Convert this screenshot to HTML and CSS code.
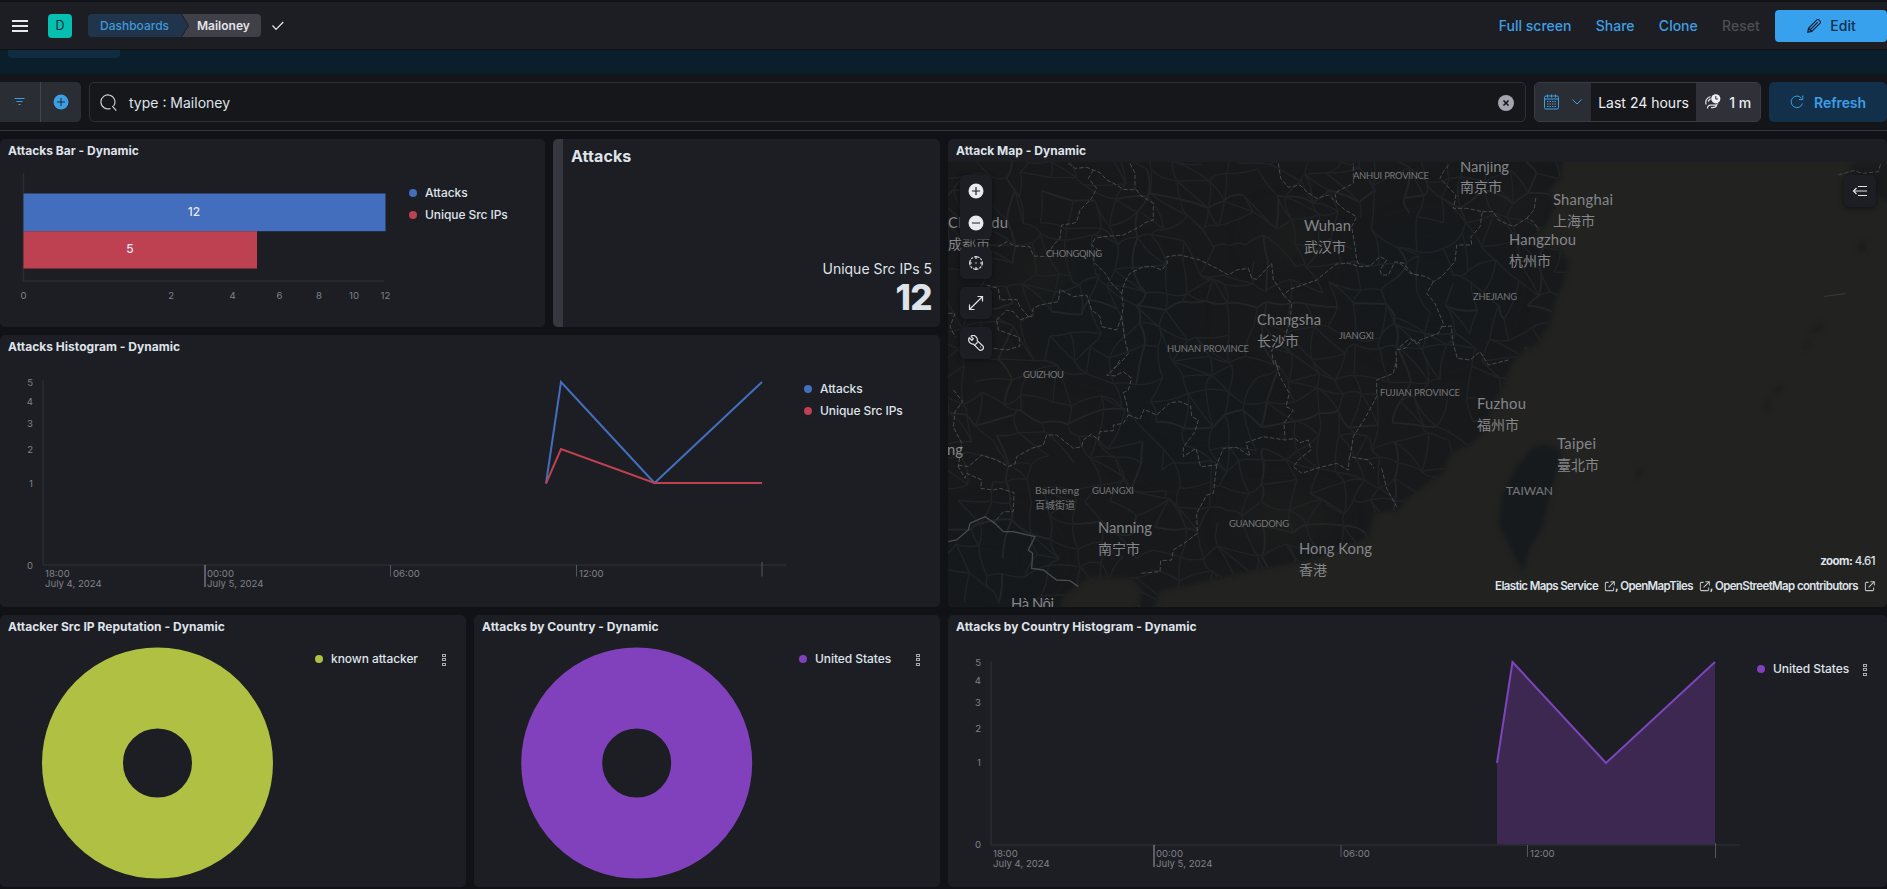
FILE: index.html
```html
<!DOCTYPE html>
<html lang="en">
<head>
<meta charset="utf-8">
<title>Mailoney</title>
<link rel="stylesheet" href="styles.css">
</head>
<body>
<header class="topbar">
  <button class="menu" aria-label="Menu"><i></i><i></i><i></i></button>
  <span class="space">D</span>
  <nav class="crumbs"><a class="crumb first">Dashboards</a><span class="crumb last">Mailoney</span></nav>
  <svg class="check" width="14" height="12" viewBox="0 0 14 12"><path d="M1.5 5.5 5 9.3 12.3 2"/></svg>
  <div class="actions">
    <a>Full screen</a><a>Share</a><a>Clone</a><a class="off">Reset</a>
    <button class="edit"><svg width="16" height="16" viewBox="0 0 16 16"><path d="M1.8 14.2 2.5 10.300 10.900 1.900a1.400 1.400 0 0 1 2 0l1.200 1.200a1.400 1.400 0 0 1 0 2L5.700 13.500ZM2.500 10.300l3.200 3.200M4.300 11.700l7.500-7.500"/></svg>Edit</button>
  </div>
</header>
<div class="strip"><span></span></div>
<section class="query">
  <div class="filters">
    <button><svg width="12" height="10" viewBox="0 0 12 10" class="stroke"><path d="M.5 1.500h10M2.500 4.500h6M4.500 7.500h2"/></svg></button>
    <button><svg width="16" height="16" viewBox="0 0 16 16"><circle cx="8" cy="8" r="7.500" fill="#3d9fe3"/><path d="M8 4v8M4 8h8" stroke="#202a36"/></svg></button>
  </div>
  <div class="search">
    <svg width="18" height="18" viewBox="0 0 18 18"><path d="M10.500 14.400A7 7 0 1 1 13.600 12M12.300 12.200l4 4.500" fill="none" stroke="#d5d8df" stroke-width="1.100"/></svg>
    <span>type : Mailoney</span>
    <svg class="clear" width="16" height="16" viewBox="0 0 16 16"><circle cx="8" cy="8" r="8" fill="#a3a6ad"/><path d="m5.500 5.500 5 5m0-5-5 5" stroke="#17181d" stroke-width="1.700"/></svg>
  </div>
  <div class="dates">
    <button class="cal">
      <svg width="15" height="16" viewBox="0 0 15 16" class="stroke"><rect x=".5" y="2" width="14" height="13" rx="1.500"/><path d="M.5 5h14M3.500.500v3M7.500.500v3M11.500.500v3"/><path d="M3 7.500h9M3 10h9M3 12.500h9" stroke-dasharray="1.500 1"/></svg>
      <svg width="10" height="6" viewBox="0 0 10 6" class="stroke"><path d="m.5.500 4.500 4.500L9.500.500"/></svg>
    </button>
    <span class="range">Last 24 hours</span>
    <span class="every"><svg width="16" height="16" viewBox="0 0 16 16"><g fill="none" stroke="#dfe1e8" stroke-width="1.200"><path d="M5.500 2.500A6 6 0 0 0 1.200 10.500M2.500 14.500a3 3 0 0 1 3-3.300h4.500A4.500 4.500 0 0 0 13 9.500M3 7.500l2.500-3M6 13.500a6 6 0 0 0 6-2"/></g><circle cx="10.800" cy="4.800" r="4.600" fill="#eef0f5"/><path d="M10.800 2v3h2.200" fill="none" stroke="#2b2c33"/></svg>1 m</span>
  </div>
  <button class="refresh"><svg width="14" height="14" viewBox="0 0 14 14" class="stroke"><path d="M12.500 8.500A5.800 5.800 0 1 1 11.300 3M12.800.500v4H9"/></svg>Refresh</button>
</section>
<main class="dash">
  <div class="left">
    <div class="row">
      <article class="panel bar">
        <h2>Attacks Bar - Dynamic</h2>
        <div class="body">
          <svg width="408" height="165" viewBox="0 162 408 165">
            <path class="axis" d="M23.500 173V281.500"/><path class="axis" d="M23 281H384"/>
            <rect x="23.500" y="193.500" width="362" height="37.700" fill="#426ebd"/>
            <rect x="23.500" y="231.200" width="233.500" height="37.300" fill="#bd4150"/>
            <g class="val"><text x="194" y="216">12</text><text x="130" y="253">5</text></g>
            <g class="tick mid"><text x="23.500" y="299">0</text><text x="171.300" y="299">2</text><text x="232.500" y="299">4</text><text x="279.500" y="299">6</text><text x="319" y="299">8</text><text x="354" y="299">10</text><text x="385.500" y="299">12</text></g>
          </svg>
          <ul class="legend"><li><b class="blue"></b>Attacks</li><li><b class="red"></b>Unique Src IPs</li></ul>
        </div>
      </article>
      <article class="panel metric">
        <h3>Attacks</h3>
        <p>Unique Src IPs 5</p><strong>12</strong>
      </article>
    </div>
    <article class="panel histo">
      <h2>Attacks Histogram - Dynamic</h2>
      <div class="body">
        <svg width="803" height="249" viewBox="0 358 803 249">
          <path class="axis" d="M43 380V565M43 565H786"/>
          <path class="mark" d="M390.500 565v11.500M576.500 565v11.500M762 562v14.500"/><path class="mark strong" d="M205 565v22"/>
          <g class="tick end"><text x="33" y="385.500">5</text><text x="33" y="404.500">4</text><text x="33" y="426.500">3</text><text x="33" y="452.500">2</text><text x="33" y="486.500">1</text><text x="33" y="568.500">0</text></g>
          <g class="tick"><text x="45" y="577">18:00</text><text x="45" y="587.300">July 4, 2024</text><text x="207" y="577">00:00</text><text x="207" y="587.300">July 5, 2024</text><text x="393" y="577">06:00</text><text x="579" y="577">12:00</text></g>
          <path class="line" stroke="#426ebd" d="M546 483.500 561 382 654.500 483 762 382"/>
          <path class="line" stroke="#bd4150" d="M546 483.500 561 449 654.500 483H762"/>
        </svg>
        <ul class="legend"><li><b class="blue"></b>Attacks</li><li><b class="red"></b>Unique Src IPs</li></ul>
      </div>
    </article>
  </div>
  <article class="panel map">
    <h2>Attack Map - Dynamic</h2>
    <div class="canvas">
      <svg width="939" height="445" viewBox="948 162 939 445">
        <defs>
          <clipPath id="land"><path d="M948 162H1562L1560 178 1548 190 1555 205 1545 226 1530 240 1560 250 1568 262 1563 286 1555 300 1550 324 1536 345 1520 353 1511 366 1502 388 1494 402 1484 432 1470 444 1452 452 1442 472 1422 488 1408 498 1398 510 1374 513 1368 538 1336 550 1310 560 1270 567 1220 578 1190 585 1160 590 1151 607H1138L1142 588 1131 578 1090 577 1064 596 1058 607H948Z"/></clipPath>
          <filter id="soft" x="-20%" y="-20%" width="140%" height="140%" color-interpolation-filters="sRGB"><feGaussianBlur stdDeviation="2.500"/></filter>
          <filter id="haze" x="-50%" y="-50%" width="200%" height="200%" color-interpolation-filters="sRGB"><feGaussianBlur stdDeviation="14"/></filter>
        </defs>
        <rect x="948" y="162" width="939" height="445" fill="#222220"/>
        <path filter="url(#soft)" fill="#17191b" d="M940 150H1565L1560 178 1548 190 1555 205 1545 226 1530 240 1560 250 1568 262 1563 286 1555 300 1550 324 1536 345 1520 353 1511 366 1502 388 1494 402 1484 432 1470 444 1452 452 1442 472 1422 488 1408 498 1398 510 1374 513 1368 538 1336 550 1310 560 1270 567 1220 578 1190 585 1160 590 1151 615H1138L1142 588 1131 578 1090 577 1064 596 1058 615H940Z"/>
        <g clip-path="url(#land)">
          <g filter="url(#haze)">
            <g fill="#15191c"><ellipse cx="1110" cy="310" rx="70" ry="55"/><ellipse cx="990" cy="560" rx="55" ry="40"/><ellipse cx="1190" cy="420" rx="70" ry="50"/><ellipse cx="1430" cy="290" rx="70" ry="60"/></g>
            <g fill="#1c1d1c"><ellipse cx="1042" cy="272" rx="28" ry="22"/><ellipse cx="1285" cy="520" rx="50" ry="25"/><ellipse cx="1510" cy="206" rx="35" ry="16"/><ellipse cx="1290" cy="240" rx="32" ry="22"/></g>
          </g>
          <g id="roads"></g>
        </g>
        <g filter="url(#soft)">
          <path fill="#161a1d" d="M1530 450 1545 444 1561 452 1552 490 1541 530 1530 548 1523 572 1514 555 1499 525 1502 495 1515 470Z"/>
          <path fill="#191b1d" d="M1852 162H1890V204L1877 196 1868 178 1850 175Z"/>
          <path fill="#1a1b1b" d="M1771 391 1784 384 1780 393ZM1764 406 1770 398 1769 410ZM1809 332 1824 322 1820 332ZM1803 348 1809 341 1808 350ZM1856 248 1866 240 1864 252ZM1638 464 1643 474 1637 480Z"/>
        </g>
        <path d="M1824 296.500 1846 293.500" stroke="#42443f" stroke-width=".7"/>
        <g class="border">
          <g transform="translate(940 130) scale(.33333)">
            <path d="M385 100 405 115 440 112 460 120 480 128 500 150 525 162 550 178 590 180 600 195 640 220 640 270 615 278 600 290 550 315 490 320 465 325 455 345 475 360 475 375 460 385 465 400 500 435 510 455 545 490 550 530 545 560 550 600 555 630 565 670 545 695 520 715"/>
            <path d="M570 100 585 130 585 178M460 120 445 145 470 175 455 205 420 240 410 275 400 280 365 285 360 325 340 345 325 370M175 350 200 335 225 348 270 350 280 378 320 380"/>
            <path d="M545 490 555 455 570 430 610 410 640 410 665 420 682 400 680 380 720 375 780 390 830 415 865 435 890 420 925 415 935 445 950 448 995 400 1000 450 1015 470 1030 495 1050 478 1130 450 1160 425 1190 402 1225 400 1260 410 1290 408 1320 380 1340 390 1320 420 1325 435 1345 435 1365 395 1390 400 1415 430 1440 438"/>
            <path d="M1015 100 1022 145 1045 172 1080 165 1100 185 1130 205 1165 195 1190 218 1185 190 1200 180 1240 160 1240 100M1190 218 1215 240 1250 260 1235 290 1245 350 1250 390 1260 410"/>
            <path d="M1030 495 1055 520 1050 580 1025 640 995 660 1000 700 1025 715M1370 715 1368 660 1395 655 1420 630 1440 640"/>
            <path d="M140 465 175 475 180 510 230 508 240 530 265 560 275 560 280 535 300 525 355 515 360 478 400 500 440 495 455 540 480 560 485 590 530 600 545 560M170 570 200 540 220 545 240 570 270 558M25 550 45 550 30 590 45 620M160 655 200 660 240 648 237 622 175 600 170 570"/>
          </g>
          <g transform="translate(1400 130) scale(.33333)">
            <path d="M0 400 30 430 80 440 100 455 125 440 165 395 170 345 215 345 213 320 240 290 247 245 200 235 160 235 168 195 120 145 130 125 150 100M247 245 280 245 295 270 340 290 380 265 400 275 418 300M380 265 402 240 408 200M100 455 80 490 105 520 130 580 120 600 115 610 60 630 50 642 30 625 0 650M125 590 155 588 157 630 172 685 210 690 240 665 265 705 325 690M1315 135 1360 122 1390 130 1435 125 1443 98"/>
          </g>
          <g transform="translate(940 360) scale(.33333)">
            <path d="M540 0 525 25 500 45 525 48 550 35 575 55 565 90 550 98 560 130 565 165 550 190 520 195 520 212 480 215 475 240 455 222 430 240 425 260 400 265 350 225 320 225 310 255 275 265 230 290 225 312 205 320 170 300 125 285 85 320 52 315 75 355 80 340 125 360 122 385 160 390 180 385 222 398 220 455 190 455 160 490"/>
            <path d="M565 165 600 178 612 148 650 165 690 128 720 125 752 138 755 170 775 180 765 215 730 262 730 290 768 265 782 320 830 315 850 265 890 262 930 288 918 248 970 230 1035 240 1065 235 1080 248 1105 240 1113 270 1080 295 1060 320 1085 340 1130 325 1190 310 1225 330 1228 290 1285 300 1302 325M1325 325 1340 385 1370 440"/>
            <path d="M1005 0 1020 50 1048 100 1038 140 1060 150 1032 190 1035 235M830 315 820 400 800 405 770 460 772 520 735 548 700 570 695 600 662 602 660 635 600 640M1230 290 1240 230 1275 175 1310 110 1310 60 1360 40 1370 0M40 90 68 125 45 155 40 200 65 250 55 320"/>
            <path class="solid" d="M25 545 50 540 85 510 90 490 135 470 165 490 190 515 220 515 285 530 265 570 278 580 275 625 310 630 350 660 390 662 415 680"/>
          </g>
        </g>
        <g class="city">
          <text x="1460" y="172" textLength="49">Nanjing</text><text x="1460" y="192" class="cjk">南京市</text>
          <text x="1553" y="205" textLength="60">Shanghai</text><text x="1553" y="226" class="cjk">上海市</text>
          <text x="1509" y="245" textLength="67">Hangzhou</text><text x="1509" y="266" class="cjk">杭州市</text>
          <text x="1304" y="231" textLength="47">Wuhan</text><text x="1304" y="252" class="cjk">武汉市</text>
          <text x="1257" y="325" textLength="64">Changsha</text><text x="1257" y="346" class="cjk">长沙市</text>
          <text x="948" y="228" textLength="60">Chengdu</text><text x="948" y="249" class="cjk">成都市</text>
          <text x="1477" y="409" textLength="49">Fuzhou</text><text x="1477" y="430" class="cjk">福州市</text>
          <text x="1557" y="449" textLength="39">Taipei</text><text x="1557" y="470" class="cjk">臺北市</text>
          <text x="1098" y="533" textLength="54">Nanning</text><text x="1098" y="554" class="cjk">南宁市</text>
          <text x="1299" y="554" textLength="73">Hong Kong</text><text x="1299" y="575" class="cjk">香港</text>
          <text x="1011" y="609" textLength="43">Hà Nội</text><text x="947" y="455">ng</text>
        </g>
        <g class="prov">
          <text x="1353" y="178.500" textLength="76">ANHUI PROVINCE</text><text x="1046" y="257" textLength="56">CHONGQING</text><text x="1473" y="299.500" textLength="44">ZHEJIANG</text>
          <text x="1339" y="339" textLength="35">JIANGXI</text><text x="1167" y="352" textLength="82">HUNAN PROVINCE</text><text x="1023" y="378" textLength="41">GUIZHOU</text>
          <text x="1380" y="396" textLength="80">FUJIAN PROVINCE</text><text x="1092" y="494" textLength="42">GUANGXI</text><text x="1229" y="526.500" textLength="60">GUANGDONG</text>
          <text x="1506" y="495" textLength="47" class="big">TAIWAN</text><text x="1035" y="493.500" textLength="44" class="mid">Baicheng</text><text x="1035" y="508.500" class="small">百城街道</text>
        </g>
      </svg>
      <div class="tools">
        <div class="tool pair">
          <svg width="16" height="16" viewBox="0 0 16 16"><circle cx="8" cy="8" r="7.500" fill="#e8eaf0"/><path d="M8 4v8M4 8h8" stroke="#1d1e24" stroke-width="1.200"/></svg>
          <svg width="16" height="16" viewBox="0 0 16 16"><circle cx="8" cy="8" r="7.500" fill="#e8eaf0"/><path d="M4 8h8" stroke="#1d1e24" stroke-width="1.200"/></svg>
        </div>
        <div class="tool"><svg width="16" height="16" viewBox="0 0 16 16"><circle cx="8" cy="8" r="6.300" stroke-dasharray="2.800 1.100 2.098 1.100 2.800 0"/><path d="M8 1v3M8 12v3M1 8h3M12 8h3M7.300 8h1.400"/></svg></div>
        <div class="tool"><svg width="16" height="16" viewBox="0 0 16 16"><path d="M2 14 14 2M9.500 1.500h5v5M1.500 9.500v5h5"/></svg></div>
        <div class="tool"><svg width="16" height="16" viewBox="0 0 16 16"><path d="M2.800 1.200 5.300 3.700 3.900 5.300 1.200 2.800A4.200 4.200 0 0 0 5.400 9L10.800 14.400A2.600 2.600 0 0 0 14.600 10.700L9.200 5.600A4.200 4.200 0 0 0 2.800 1.200M7.200 9.600l2.400-2.300M12 12h1"/></svg></div>
      </div>
      <div class="tool layers"><svg width="16" height="16" viewBox="0 0 16 16"><path d="M6 3.500h9M1.500 8H15M6 12.500h9M4.500 5 1.500 8l3 3"/></svg></div>
      <div class="zoomlevel"><b>zoom:</b> 4.61</div>
      <div class="credit">Elastic Maps Service<svg class="ext" viewBox="0 0 12 12"><path d="M5 1.500H2.500a1 1 0 0 0-1 1v7a1 1 0 0 0 1 1h7a1 1 0 0 0 1-1V7M7 .700h4.300V5M11 1 5 7"/></svg>, OpenMapTiles<svg class="ext" viewBox="0 0 12 12"><path d="M5 1.500H2.500a1 1 0 0 0-1 1v7a1 1 0 0 0 1 1h7a1 1 0 0 0 1-1V7M7 .700h4.300V5M11 1 5 7"/></svg>, OpenStreetMap contributors<svg class="ext" viewBox="0 0 12 12"><path d="M5 1.500H2.500a1 1 0 0 0-1 1v7a1 1 0 0 0 1 1h7a1 1 0 0 0 1-1V7M7 .700h4.300V5M11 1 5 7"/></svg></div>
    </div>
  </article>
</main>
<section class="bottom">
  <article class="panel pie">
    <h2>Attacker Src IP Reputation - Dynamic</h2>
    <div class="body">
      <svg width="314" height="249" viewBox="0 638 314 249"><circle cx="157.500" cy="763" r="75" fill="none" stroke="#afc043" stroke-width="81"/></svg>
      <ul class="legend"><li><b class="lime"></b>known attacker<i class="dots"><i></i><i></i><i></i></i></li></ul>
    </div>
  </article>
  <article class="panel pie">
    <h2>Attacks by Country - Dynamic</h2>
    <div class="body">
      <svg width="324" height="249" viewBox="474 638 324 249"><circle cx="636.700" cy="763" r="75" fill="none" stroke="#8141bc" stroke-width="81"/></svg>
      <ul class="legend"><li><b class="purple"></b>United States<i class="dots"><i></i><i></i><i></i></i></li></ul>
    </div>
  </article>
  <article class="panel area">
    <h2>Attacks by Country Histogram - Dynamic</h2>
    <div class="body">
      <svg width="808" height="249" viewBox="948 638 808 249">
        <path fill="#3d2852" d="M1497 763 1512.500 662 1606 763 1715 662V844.500H1497Z"/>
        <path class="axis" d="M991 661V845M991 845H1740"/>
        <path class="mark" d="M1341 845v12M1527.500 845v12M1715.500 843v15"/><path class="mark strong" d="M1154 845v22"/>
        <g class="tick end"><text x="981" y="665.500">5</text><text x="981" y="684">4</text><text x="981" y="706">3</text><text x="981" y="732">2</text><text x="981" y="766">1</text><text x="981" y="848">0</text></g>
        <g class="tick"><text x="993" y="857">18:00</text><text x="993" y="867.300">July 4, 2024</text><text x="1156" y="857">00:00</text><text x="1156" y="867.300">July 5, 2024</text><text x="1343" y="857">06:00</text><text x="1530" y="857">12:00</text></g>
        <path class="line" stroke="#7b45bb" d="M1497 763 1512.500 662 1606 763 1715 662"/>
      </svg>
      <ul class="legend"><li><b class="purple"></b>United States<i class="dots"><i></i><i></i><i></i></i></li></ul>
    </div>
  </article>
</section>
<script src="map.js"></script>
</body>
</html>
```
FILE: styles.css
```css
*{box-sizing:border-box}
body{margin:0;width:1887px;height:889px;overflow:hidden;background:#111216;color:#dfe3ea;font-family:Inter,"Noto Sans CJK SC",sans-serif;font-size:14px}
button{border:0;padding:0;background:none;font:inherit;color:inherit}
h2,h3,p,ul{margin:0;padding:0}
svg{display:block;flex:none}
.stroke{fill:none;stroke:#3d9fe3;stroke-width:1}
.topbar{display:flex;align-items:center;height:50px;padding:2px 0 0 12px;background:#1d1e23;border-top:2px solid #121317;border-bottom:1px solid #121317}
.topbar>*{position:relative;top:-1px}
.menu{display:flex;flex-direction:column;gap:3px;width:16px}
.menu i{height:2px;background:#e6e8ee}
.space{width:24px;height:24px;margin-left:20px;border-radius:4px;background:#05bfb1;color:#0c2b33;font-size:12.500px;line-height:24px;text-align:center}
.crumbs{display:flex;margin-left:16px;font-size:12px;font-weight:500;line-height:23px}
.crumb{height:23px}
.crumb.first{width:100px;padding-left:12px;border-radius:4px 0 0 4px;background:#20354b;color:#3f99d9;clip-path:polygon(0 0,93px 0,100px 50%,93px 100%,0 100%)}
.crumb.last{width:79px;margin-left:-6px;padding-left:15px;border-radius:0 4px 4px 0;background:#404148;color:#e2e4ea;font-weight:600;clip-path:polygon(0 0,100% 0,100% 100%,0 100%,7px 50%)}
.check{margin-left:10px;fill:none;stroke:#e6e8ee;stroke-width:1.200}
.actions{display:flex;align-items:center;gap:24.300px;margin-left:auto;color:#409fe4;font-weight:500}
.actions .off{color:#4c4e55}
.edit{display:flex;align-items:center;justify-content:center;gap:8px;width:112px;height:32px;margin-left:-9px;border-radius:4px;background:#38a1ed;color:#12304a}
.edit svg{fill:none;stroke:#10202f;stroke-width:1.200}
.strip{height:24px;padding-left:8px;background:#0b1e2c}
.strip span{display:block;width:112px;height:8px;border-radius:0 0 4px 4px;background:#102c40}
.query{display:flex;height:57px;padding-top:8px;border-bottom:1px solid #34363c;background:#141519}
.filters{display:flex;width:81px;height:40px;border-radius:0 5px 5px 0;background:#2b2d34}
.filters button{display:grid;place-items:center;width:40px}
.filters button+button{width:41px;border-left:1px solid #43454d}
.search{display:flex;align-items:center;width:1437px;height:40px;margin-left:8px;padding:3px 11px 2px 10px;border:1px solid #2e3036;border-radius:5px;background:#16171b}
.search span{margin-left:11px}
.search .clear{margin-left:auto}
.dates{display:flex;width:227px;height:40px;margin-left:8px;border:1px solid #3a3c43;border-radius:5px;overflow:hidden;background:#16171b;color:#eceef3}
.cal{display:flex;align-items:center;justify-content:center;gap:13px;width:56px;background:#2b2d34}
.range,.every{display:flex;align-items:center;justify-content:center}
.range{width:106px}
.every{width:64px;gap:8px;background:#303138;font-weight:500}
.refresh{display:flex;align-items:center;justify-content:center;gap:10px;width:118px;height:40px;margin-left:8px;border-radius:5px;background:#13304a;color:#3d9ee8;font-weight:600;letter-spacing:-.1px}
.dash{display:flex;gap:8px;height:476px;padding-top:8px}
.left{display:flex;flex-direction:column;gap:8px;width:940px}
.row{display:flex;gap:8px;height:188px}
.panel{background:#1d1e23;border-radius:5px;overflow:hidden}
.panel h2{height:23px;padding-left:8px;font-size:12px;font-weight:700;line-height:24px;white-space:nowrap;letter-spacing:.03px}
.body{display:flex}
.bar{width:545px}
.metric{display:flex;flex-direction:column;align-items:flex-end;width:387px;border-left:10px solid #37383f;padding-right:8px}
.metric h3{align-self:flex-start;margin:7px 0 0 8px;font-size:16px;line-height:21px;letter-spacing:.1px}
.metric p{margin-top:92px;font-size:14px;line-height:20px}
.metric strong{font-size:35px;font-weight:800;line-height:37px;letter-spacing:-.600px}
.histo{height:272px}
.legend{flex:1;padding:19px 17px 0 .500px;list-style:none;font-size:12px;font-weight:500;letter-spacing:-.07px}
.pie .legend{padding-top:9px}
.legend li{display:flex;align-items:center;height:22px}
.legend b{width:8px;height:8px;margin:1px 8.500px 0 0;border-radius:50%}
.blue{background:#426ebd}.red{background:#bd4150}.lime{background:#afc043}.purple{background:#8141bc}
.dots{display:flex;flex-direction:column;gap:1.500px;margin:3px 3px 0 auto}
.dots i{width:4px;height:3px;border:1px solid #a9abb3}
.axis{fill:none;stroke:#2b2c32;stroke-width:1.500}
.mark{fill:none;stroke:#55575e;stroke-width:1}
.mark.strong{stroke:#74767d;stroke-width:1.500}
.line{fill:none;stroke-width:2}
.tick{fill:#7f8187;font-size:9.600px}
.tick.mid,.val{text-anchor:middle}
.tick.end{text-anchor:end}
.val{fill:#e6e9f1;font-size:12px;font-weight:500}
.map{width:939px}
.canvas{position:relative;height:445px}
.border{fill:none;stroke:#494b4c}
.border path{stroke-width:3;stroke-dasharray:13 6}
.border .solid{stroke-dasharray:none;stroke-width:4}
.road{fill:none;stroke:#202325;stroke-width:1.500}
.road.main{stroke:#232425;stroke-width:2}
.city{fill:#85878a;font-family:Lato,"Noto Sans CJK SC",sans-serif;font-size:14.800px}
.city .cjk{font-size:14px}
.prov{fill:#77797b;font-family:Lato,"Noto Sans CJK SC",sans-serif;font-size:9.400px}
.prov .big{font-size:12px}
.prov .mid{font-size:10.300px}
.prov .small{font-size:10px}
.tools{position:absolute;left:12px;top:13px;display:flex;flex-direction:column;gap:8px}
.tool{display:grid;place-items:center;width:32px;height:32px;border-radius:5px;background:#1d1e23;box-shadow:0 1px 5px #0e0f12}
.tool svg{fill:none;stroke:#dfe2e8;stroke-width:1.200}
.tool.pair{height:64px}
.tool.pair svg{stroke:none}
.tool.layers{position:absolute;right:11px;top:13px}
.zoomlevel,.credit{position:absolute;right:12px;font-size:11.500px;line-height:16px}
.zoomlevel{top:391px;font-weight:500;letter-spacing:-.550px}
.credit{top:416px;display:flex;align-items:center;font-weight:600;white-space:pre;letter-spacing:-.620px}
.ext{width:11px;height:11px;margin-left:6px;fill:none;stroke:#bfc1c5;stroke-width:1.100}
.bottom{display:flex;gap:8px;height:272px;margin-top:8px}
.pie{width:466px}
.area{width:939px}
```
FILE: map.js
```js
// Draws the faint road mesh under the province borders.
(function () {
  var seed = 17;
  function rnd() { seed = (seed * 16807) % 2147483647; return seed / 2147483647; }
  var host = document.getElementById('roads');
  var cols = 30, rows = 22, step = 22, pts = [];
  for (var r = 0; r < rows; r++) {
    pts.push([]);
    for (var c = 0; c < cols; c++) {
      pts[r].push([940 + c * step + rnd() * 20 - 10, 155 + r * step + rnd() * 20 - 10]);
    }
  }
  function link(a, b, main) {
    var mx = (a[0] + b[0]) / 2 + rnd() * 10 - 5, my = (a[1] + b[1]) / 2 + rnd() * 10 - 5;
    var p = document.createElementNS('http://www.w3.org/2000/svg', 'path');
    p.setAttribute('class', main ? 'road main' : 'road');
    p.setAttribute('d', 'M' + a[0].toFixed(1) + ' ' + a[1].toFixed(1) + 'Q' + mx.toFixed(1) + ' ' + my.toFixed(1) + ' ' + b[0].toFixed(1) + ' ' + b[1].toFixed(1));
    host.appendChild(p);
  }
  for (r = 0; r < rows; r++) {
    for (c = 0; c < cols; c++) {
      if (c + 1 < cols && rnd() < 0.75) link(pts[r][c], pts[r][c + 1], r % 5 === 2);
      if (r + 1 < rows && rnd() < 0.75) link(pts[r][c], pts[r + 1][c], c % 6 === 3);
      if (r + 1 < rows && c + 1 < cols && rnd() < 0.3) link(pts[r][c], pts[r + 1][c + 1], false);
    }
  }
})();
```
